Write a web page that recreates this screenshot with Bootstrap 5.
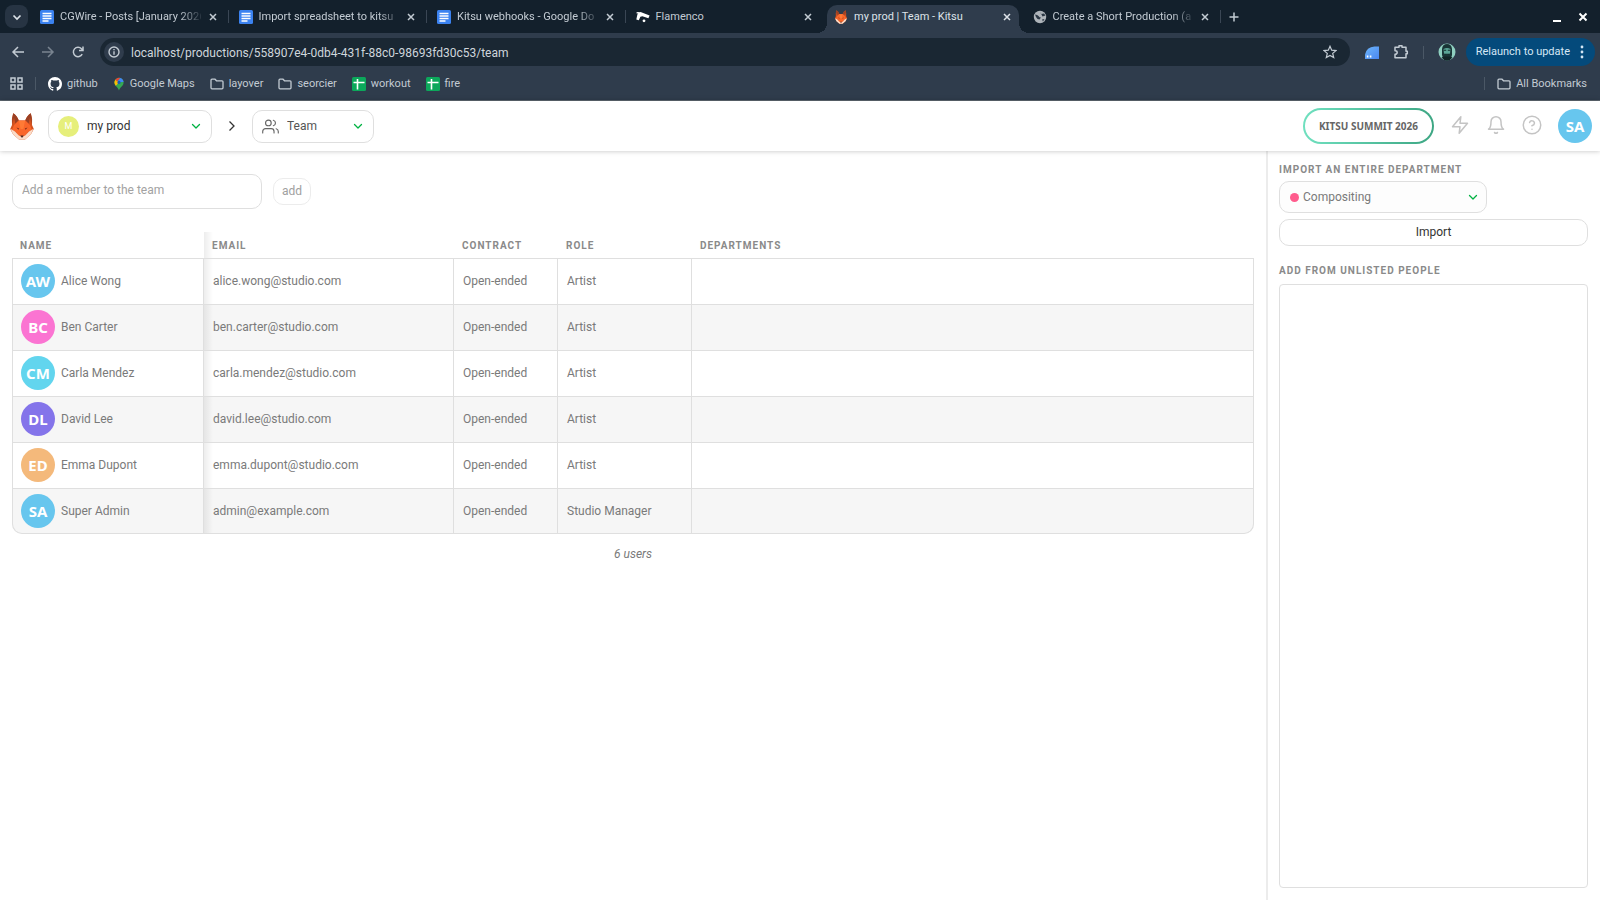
<!DOCTYPE html>
<html lang="en">
<head>
<meta charset="utf-8">
<meta name="viewport" content="width=device-width, initial-scale=1">
<title>my prod | Team - Kitsu</title>
<link href="https://cdn.jsdelivr.net/npm/bootstrap@5.3.0/dist/css/bootstrap.min.css" rel="stylesheet">
<style>
  :root { --line: #dfdfdf; --ink: #7a7a7a; --chrome: #2f3c4c; --chrome-dark: #13202c; --chrome-ink: #c3cbd3; }
  body { font-family: Roboto, "Noto Sans", sans-serif; font-size: 12px; line-height: 16px; color: var(--ink); background: #fff; }
  svg { display: block; flex: none; }
  button { line-height: 16px; }

  /* browser window */
  .browser { background: var(--chrome); color: var(--chrome-ink); font-size: 11px; border-bottom: 1px solid #5e6770; }
  .browser button, .browser a { color: inherit; text-decoration: none; }
  .plain-btn { background: none; border: 0; padding: 0; color: inherit; }
  .tab-strip { background: var(--chrome-dark); height: 33px; }
  .tab-menu { width: 23px; height: 23px; border-radius: 8px; background: #273443; margin: 5px 2px 5px 5px; }
  .tab-list { flex: 0 1 1191px; min-width: 0; }
  .browser-tab { flex: 1 1 0; min-width: 0; height: 33px; padding: 0 12px 0 10px; }
  .browser-tab.sep { background: linear-gradient(#3a4654, #3a4654) right center / 1px 13px no-repeat; }
  .tab-title { flex: 1; min-width: 0; white-space: nowrap; margin: 0 8px 0 6px; }
  .fade-end { -webkit-mask-image: linear-gradient(90deg, #000 85%, transparent 102%); mask-image: linear-gradient(90deg, #000 85%, transparent 102%); }
  .browser-tab.current { color: #dde3e9; position: relative; }
  .browser-tab.current::before { content: ""; position: absolute; z-index: 0; inset: 5px 4px 0 3px; background: var(--chrome); border-radius: 10px 10px 0 0; }
  .browser-tab.current > * { position: relative; }
  .corner { position: absolute !important; bottom: 0; width: 10px; height: 10px; }
  .corner-l { left: -7px; background: radial-gradient(circle at 0 0, var(--chrome-dark) 10px, var(--chrome) 10px); }
  .corner-r { right: -6px; background: radial-gradient(circle at 100% 0, var(--chrome-dark) 10px, var(--chrome) 10px); }
  .v-sep { width: 1px; height: 13px; background: #4b5866; flex: none; }
  .toolbar { height: 38px; padding: 0 5px 0 11px; }
  .toolbar-left { padding-right: 15px; }
  .toolbar-right { padding-left: 15px; gap: 14px; }
  .address { background: #1a2733; height: 28px; border-radius: 14px; padding: 0 13px 0 4px; }
  .address input { background: none; border: 0; outline: 0; padding: 1px 0 0; color: #cfd6dc; font-size: 12px; min-width: 0; }
  .site-info { width: 20px; height: 20px; border-radius: 50%; background: #2f3c4c; margin-right: 7px; }
  .relaunch { background: #044a7b; color: #d5e7f5 !important; border: 0; border-radius: 14px; height: 28px; padding: 0 11px 0 10px; gap: 10px; font-size: 11px; white-space: nowrap; }
  .toolbar-right .relaunch { margin-left: -4px; }
  .bookmarks { height: 29px; padding: 0 13px 4px 10px; }
  .bookmarks a { gap: 5px; }
  .bookmarks .v-sep { margin: 0 12px; }
  .bookmark-links { gap: 15px; }

  /* application */
  .topbar { height: 50px; padding: 0 8px 0 10px; box-shadow: 0 0 5px rgba(0,0,0,.25); position: relative; z-index: 2; background: #fff; }
  .topbar-picks { margin-left: 14px; gap: 15px; }
  .pick { border: 1px solid var(--line); border-radius: 10px; height: 33px; padding: 0 10px 0 9px; background: #fff; }
  .pick select { appearance: none; border: 0; outline: 0; padding: 0; color: inherit; font-size: 12px; line-height: 16px; min-width: 0;
    background: url("data:image/svg+xml,%3Csvg xmlns='http://www.w3.org/2000/svg' width='10' height='10' fill='none' stroke='%2300b242' stroke-width='1.3' stroke-linecap='round' stroke-linejoin='round'%3E%3Cpath d='M1.5 3.5 5 7l3.5-3.500'/%3E%3C/svg%3E") right center no-repeat; }
  .pick-prod { width: 164px; color: #333; }
  .pick-section { width: 122px; color: #555; }
  .pick-dept { width: 208px; color: var(--ink); height: 32px; background: #fdfdfd; }
  .pick-dept select { background-color: #fdfdfd; }
  .prod-dot { width: 21px; height: 21px; border-radius: 50%; background: #e6ef7b; color: #fff; font-size: 9px; }
  .summit { height: 36px; border: 2px solid transparent; border-radius: 18px; padding: 0 14px; font-family: "Noto Sans", sans-serif; font-size: 10px; font-weight: 700; color: #666; text-decoration: none; white-space: nowrap;
    background: linear-gradient(#fff, #fff) padding-box, linear-gradient(90deg, #6fe0bf, #3da683) border-box; }
  .top-icon { color: #c4c4c4; padding-bottom: 2px; }
  .face { width: 34px; height: 34px; border-radius: 50%; color: #fff; font-family: "Noto Sans", sans-serif; font-size: 15px; font-weight: 700; flex: none; }
  .main-pane { padding: 23px 12px 0; min-width: 0; }
  .member-input { width: 250px; height: 35px; border: 1px solid var(--line); border-radius: 10px; padding: 0 9px 3px; font-size: 12px; color: #555; }
  .member-input::placeholder { color: #a2a2a2; opacity: 1; }
  .add-btn { height: 27px; border: 1px solid #ececec; border-radius: 10px; background: #fff; color: #a0a0a0; padding: 0 8px 1px; margin-left: 11px; font-size: 12px; }
  .caps { font-size: 10px; line-height: 16px; font-weight: 700; letter-spacing: 1px; text-transform: uppercase; color: #8a8a8a; }
  .people { border-collapse: separate; border-spacing: 0; table-layout: fixed; width: 100%; margin-top: 23px; }
  .people th { height: 27px; padding: 1px 8px 0; border-bottom: 1px solid var(--line); }
  .people td { height: 46px; padding: 0 9px 1px; border-right: 1px solid var(--line); border-bottom: 1px solid var(--line); }
  .people td:first-child { border-left: 1px solid var(--line); padding-left: 8px; }
  .people .face { margin-right: 6px; }
  .people tbody tr:nth-child(even) { background: #f6f6f6; }
  .people th:nth-child(2), .people td:nth-child(2) { background: linear-gradient(90deg, rgba(0,0,0,.07), transparent) left / 9px 100% no-repeat; }
  .people tbody tr:last-child { border-radius: 0 0 10px 10px; }
  .people tbody tr:last-child td { height: 45px; }
  .people tbody tr:last-child td:first-child { border-bottom-left-radius: 10px; }
  .people tbody tr:last-child td:last-child { border-bottom-right-radius: 10px; }
  .side-pane { width: 334px; flex: none; border-left: 2px solid #ececec; padding: 11px 12px 12px 11px; }
  .import-btn { height: 27px; border: 1px solid var(--line); border-radius: 10px; background: #fff; color: #333; font-size: 12px; padding: 0 0 2px; margin-top: 6px; }
  .pick-dept { margin-top: 3px; padding: 0 8px 0 10px; }
  .side-title { margin: 17px 0 5px; }
  .dept-dot { width: 9px; height: 9px; border-radius: 50%; background: #ff5c8d; flex: none; }
  .unlisted { border: 1px solid var(--line); border-radius: 4px; }
</style>
</head>
<body class="d-flex flex-column min-vh-100">

<svg width="0" height="0" class="position-absolute" aria-hidden="true">
  <defs>
    <symbol id="doc" viewBox="0 0 14 14"><rect width="14" height="14" rx="1.5" fill="#3b82f0"/><path d="M2.500 3.500h9M2.500 6h9M2.500 8.500h9M2.500 11h6" stroke="#fff" stroke-width="1.300"/></symbol>
    <symbol id="sheet" viewBox="0 0 14 14"><rect width="14" height="14" rx="1.5" fill="#0ca85b"/><path d="M5.500 2v10.500M1.500 5.500h11" stroke="#fff" stroke-width="1.600"/></symbol>
    <symbol id="close" viewBox="0 0 8 8"><path d="M1 1l6 6M7 1L1 7" stroke="currentColor" stroke-width="1.500"/></symbol>
    <symbol id="folder" viewBox="0 0 14 12"><path d="M1 9.800V2.200Q1 1.200 2 1.200h3l1.500 1.600H12q1 0 1 1v6q0 1-1 1H2q-1 0-1-1z" fill="none" stroke="currentColor" stroke-width="1.300"/></symbol>
    <symbol id="fox" viewBox="0 0 24 27">
      <path d="M3.200.3Q7 2.500 8.800 7.600h6.400Q17 2.500 20.800.3 22.600 5 22 12l1.800 4-3 5.500-5.800 5H9l-5.800-5-3-5.500L2 12Q1.400 5 3.200.3z" fill="#d4521f"/>
      <path d="M3.200.3Q7 2.500 8.800 7.600L5.500 11 4 4.500 2.500 11Q1.500 5 3.200.3zM20.800.3Q17 2.500 15.200 7.600L18.500 11 20 4.500l1.500 6.500Q22.500 5 20.800.3z" fill="#9a4024"/>
      <path d="M8.500 7.500h7L20 12l2 5-4 2-3 4.500H9L6 19l-4-2 2-5z" fill="#f9662a"/>
      <path d="M.4 15.800 5 18.500l3.800 4L12 24l3.200-1.500 3.800-4 4.600-2.700-2.800 5.700-5.800 5H9l-5.800-5z" fill="#fbdcc8"/>
      <path d="M9 8h6l-1.600 8h-2.800z" fill="#ff7a35"/>
      <path d="M6.500 14.600l2.700.9-.8 1.200zM17.500 14.600l-2.700.9.8 1.200z" fill="#7d2b18"/>
      <path d="M10.300 22.600h3.400L12 25z" fill="#4a2a24"/>
    </symbol>
  </defs>
</svg>

<header class="browser">
  <div class="tab-strip d-flex align-items-center">
    <button class="tab-menu plain-btn d-flex align-items-center justify-content-center" aria-label="Search tabs"><svg width="10" height="10" fill="none" stroke="#dde3e9" stroke-width="1.700"><path d="M1.500 3.500 5 7l3.500-3.500"/></svg></button>
    <nav class="tab-list d-flex">
      <div class="browser-tab sep d-flex align-items-center"><svg width="14" height="14"><use href="#doc"/></svg><a href="#" class="tab-title fade-end">CGWire - Posts [January 2026</a><button class="plain-btn" aria-label="Close tab"><svg width="8" height="8"><use href="#close"/></svg></button></div>
      <div class="browser-tab sep d-flex align-items-center"><svg width="14" height="14"><use href="#doc"/></svg><a href="#" class="tab-title fade-end">Import spreadsheet to kitsu</a><button class="plain-btn" aria-label="Close tab"><svg width="8" height="8"><use href="#close"/></svg></button></div>
      <div class="browser-tab sep d-flex align-items-center"><svg width="14" height="14"><use href="#doc"/></svg><a href="#" class="tab-title fade-end">Kitsu webhooks - Google Do</a><button class="plain-btn" aria-label="Close tab"><svg width="8" height="8"><use href="#close"/></svg></button></div>
      <div class="browser-tab d-flex align-items-center"><svg width="14" height="14" viewBox="0 0 14 14"><path d="M.3 9.500 1.400 4.500Q2.200 2 4.600 2L13.600 5.500l-1.200 2.700-6-1.900-2 .5-1.600 3.500z" fill="#fff"/><path d="M.6 2.800h3" stroke="#fff" stroke-width="1.400"/><circle cx="8" cy="10.800" r="1.400" fill="#fff"/></svg><a href="#" class="tab-title">Flamenco</a><button class="plain-btn" aria-label="Close tab"><svg width="8" height="8"><use href="#close"/></svg></button></div>
      <div class="browser-tab current d-flex align-items-center"><span class="corner corner-l"></span><span class="corner corner-r"></span><svg width="14" height="14"><use href="#fox"/></svg><a href="#" class="tab-title">my prod | Team - Kitsu</a><button class="plain-btn" aria-label="Close tab"><svg width="8" height="8"><use href="#close"/></svg></button></div>
      <div class="browser-tab sep d-flex align-items-center"><svg width="14" height="14" viewBox="0 0 14 14"><circle cx="7" cy="7" r="6.200" fill="#aeb4ba"/><path d="M2 4.500q2.500 0 3.500 1.500t2.500 1.500L6.500 9.500 4.500 9 3 7zM7 1.500l1 2.500 3-.5 1.500 2-3 1zM9 9.500l2.500-.5-1.500 2.500z" fill="#2a3744"/></svg><a href="#" class="tab-title fade-end">Create a Short Production (a</a><button class="plain-btn" aria-label="Close tab"><svg width="8" height="8"><use href="#close"/></svg></button></div>
    </nav>
    <button class="plain-btn ms-2" aria-label="New tab"><svg width="10" height="10" stroke="currentColor" stroke-width="1.500"><path d="M5 .5v9M.5 5h9"/></svg></button>
    <div class="ms-auto d-flex align-items-center gap-3 pe-2 me-1">
      <button class="plain-btn pt-2" aria-label="Minimize"><svg width="10" height="4"><path d="M1 2h8" stroke="#fff" stroke-width="2"/></svg></button>
      <button class="plain-btn text-white" aria-label="Close window"><svg width="10" height="10" stroke="#fff" stroke-width="2"><path d="M1.500 1.500l7 7M8.500 1.500l-7 7"/></svg></button>
    </div>
  </div>

  <div class="toolbar d-flex align-items-center">
    <div class="toolbar-left d-flex align-items-center gap-3">
      <button class="plain-btn" aria-label="Back"><svg width="14" height="14" fill="none" stroke="currentColor" stroke-width="1.500"><path d="M13 7H2.500M7 2 2 7l5 5"/></svg></button>
      <button class="plain-btn opacity-50" aria-label="Forward"><svg width="14" height="14" fill="none" stroke="currentColor" stroke-width="1.500"><path d="M1 7h10.500M7 2l5 5-5 5"/></svg></button>
      <button class="plain-btn" aria-label="Reload"><svg width="14" height="14" fill="none" stroke="currentColor" stroke-width="1.500"><path d="M11.200 9.200A4.700 4.700 0 1 1 10.500 3.700L12 5.200M12 1.500v4H8"/></svg></button>
    </div>
    <div class="address d-flex align-items-center flex-grow-1">
      <span class="site-info d-flex align-items-center justify-content-center"><svg width="12" height="12" fill="none" stroke="currentColor" stroke-width="1.400"><circle cx="6" cy="6" r="5"/><path d="M6 5.200v3.600M6 3v1.200"/></svg></span>
      <input class="flex-grow-1" type="text" aria-label="Address" value="localhost/productions/558907e4-0db4-431f-88c0-98693fd30c53/team">
      <button class="plain-btn" aria-label="Bookmark this page"><svg width="14" height="14" fill="none" stroke="currentColor" stroke-width="1.200"><path d="M7 1.300l1.700 3.900 4.200.4-3.200 2.800 1 4.200L7 10.400l-3.700 2.200 1-4.200L1.100 5.600l4.200-.4z"/></svg></button>
    </div>
    <div class="toolbar-right d-flex align-items-center">
      <svg width="14" height="14"><defs><linearGradient id="whale" x1="0" y1="0" x2="1" y2="1"><stop offset="0" stop-color="#6db6fa"/><stop offset="1" stop-color="#4a86f0"/></linearGradient></defs><path d="M0 14V9.500Q1.500 2 9.500 1.500H14V14z" fill="url(#whale)"/><path d="M1.800 11.500h1.600M4.800 11.500h1.600" stroke="#fff" stroke-width="2"/></svg>
      <svg width="16" height="16" fill="none" stroke="currentColor" stroke-width="1.500" stroke-linejoin="round"><path d="M2 3.200h4V1.800h3v1.400h4v4h1.300v2.600H13v4H2v-3.500q2.200-.2 2.200-1.900T2 6.700z"/></svg>
      <span class="v-sep"></span>
      <svg width="18" height="18" viewBox="0 0 18 18"><circle cx="9" cy="9" r="8.500" fill="#8fd0c0"/><path d="M4 6Q4.500 1 9 1t5 5v6q-1 5-5 5.400Q5 17 4 12z" fill="#193536"/><path d="M5.500 6q3.500-1.800 7 0l-.5 4.500q-3 1.500-6 0z" fill="#5aa596"/><path d="M5.800 7.300h2.400M9.800 7.300h2.400M7 11.300h4" stroke="#14302f" stroke-width="1.100"/><path d="M3.500 14.500q2 2.800 5.500 3 3.500-.2 5.500-3L12 13.500H6z" fill="#122526"/></svg>
      <button class="relaunch d-flex align-items-center">Relaunch to update<svg width="4" height="14" fill="currentColor"><circle cx="2" cy="2" r="1.400"/><circle cx="2" cy="7" r="1.400"/><circle cx="2" cy="12" r="1.400"/></svg></button>
    </div>
  </div>

  <nav class="bookmarks d-flex align-items-center">
    <button class="plain-btn" aria-label="Apps"><svg width="13" height="13" fill="none" stroke="currentColor" stroke-width="1.500"><path d="M1 1h4v4H1zM8 1h4v4H8zM1 8h4v4H1zM8 8h4v4H8z"/></svg></button>
    <span class="v-sep"></span>
    <div class="bookmark-links d-flex align-items-center">
      <a href="#" class="d-flex align-items-center"><svg width="14" height="14" viewBox="0 0 16 16"><path fill="#fff" d="M8 0C3.580 0 0 3.580 0 8c0 3.540 2.290 6.530 5.470 7.590.4.070.55-.17.55-.38 0-.19-.01-.82-.01-1.490-2.010.37-2.530-.49-2.690-.94-.09-.23-.48-.94-.82-1.130-.28-.15-.68-.52-.01-.53.63-.01 1.080.58 1.230.82.720 1.210 1.870.87 2.330.66.070-.52.280-.87.510-1.070-1.780-.2-3.640-.89-3.640-3.950 0-.87.310-1.590.82-2.150-.08-.2-.36-1.020.08-2.120 0 0 .67-.21 2.200.82a7.600 7.600 0 0 1 4 0c1.530-1.040 2.200-.82 2.200-.82.440 1.100.16 1.920.08 2.120.510.56.82 1.270.82 2.150 0 3.070-1.870 3.750-3.650 3.950.290.25.540.73.540 1.480 0 1.070-.01 1.930-.01 2.200 0 .21.150.46.550.38A8 8 0 0 0 16 8c0-4.420-3.580-8-8-8z"/></svg>github</a>
      <a href="#" class="d-flex align-items-center"><svg width="12" height="14" viewBox="0 0 12 14"><path d="M6 .8a4.600 4.600 0 0 1 4.600 4.700C10.600 9 7 10 6 13.400 5 10 1.400 9 1.400 5.500A4.600 4.600 0 0 1 6 .8z" fill="#34a853"/><path d="M1.400 5.500A4.600 4.600 0 0 1 2.600 2.400L6 5.500 2.800 8.700Q1.400 7 1.400 5.500z" fill="#fbbc04"/><path d="M2.500 2.500A4.500 4.500 0 0 1 6 .8L7.500 1 4 4.500z" fill="#ea4335"/><path d="M7.200.9Q10.300 1.800 10.600 5L7 5 4.800 4z" fill="#4285f4"/><circle cx="6" cy="5.400" r="1.600" fill="#1a5bb8"/></svg>Google Maps</a>
      <a href="#" class="d-flex align-items-center"><svg width="14" height="12"><use href="#folder"/></svg>layover</a>
      <a href="#" class="d-flex align-items-center"><svg width="14" height="12"><use href="#folder"/></svg>seorcier</a>
      <a href="#" class="d-flex align-items-center"><svg width="14" height="14"><use href="#sheet"/></svg>workout</a>
      <a href="#" class="d-flex align-items-center"><svg width="14" height="14"><use href="#sheet"/></svg>fire</a>
    </div>
    <span class="v-sep ms-auto"></span>
    <a href="#" class="d-flex align-items-center"><svg width="14" height="12"><use href="#folder"/></svg>All Bookmarks</a>
  </nav>
</header>

<div class="topbar d-flex align-items-center">
  <a href="#" aria-label="Kitsu home"><svg width="24" height="27"><use href="#fox"/></svg></a>
  <div class="topbar-picks d-flex align-items-center">
    <div class="pick pick-prod d-flex align-items-center">
      <span class="prod-dot d-flex align-items-center justify-content-center me-2">M</span>
      <select class="flex-grow-1" aria-label="Production"><option>my prod</option></select>
    </div>
    <svg width="10" height="12" fill="none" stroke="#333" stroke-width="1.300"><path d="M2.500 1.500 7 6l-4.500 4.500"/></svg>
    <div class="pick pick-section d-flex align-items-center">
      <svg class="me-2" width="17" height="17" viewBox="0 0 24 24" fill="none" stroke="#666" stroke-width="1.600" stroke-linecap="round" stroke-linejoin="round"><path d="M17 21v-2a4 4 0 0 0-4-4H5a4 4 0 0 0-4 4v2"/><circle cx="9" cy="7" r="4"/><path d="M23 21v-2a4 4 0 0 0-3-3.870M16 3.130a4 4 0 0 1 0 7.750"/></svg>
      <select class="flex-grow-1" aria-label="Section"><option>Team</option></select>
    </div>
  </div>
  <div class="d-flex align-items-center ms-auto gap-3">
    <a href="#" class="summit d-flex align-items-center">KITSU SUMMIT 2026</a>
    <button class="plain-btn top-icon" aria-label="News"><svg width="20" height="20" viewBox="0 0 24 24" fill="none" stroke="currentColor" stroke-width="1.800" stroke-linejoin="round"><path d="M13 2 3 14h9l-1 8 10-12h-9z"/></svg></button>
    <button class="plain-btn top-icon" aria-label="Notifications"><svg width="20" height="20" viewBox="0 0 24 24" fill="none" stroke="currentColor" stroke-width="1.800" stroke-linecap="round" stroke-linejoin="round"><path d="M18 8A6 6 0 0 0 6 8c0 7-3 9-3 9h18s-3-2-3-9M13.730 21a2 2 0 0 1-3.460 0"/></svg></button>
    <button class="plain-btn top-icon" aria-label="Help"><svg width="20" height="20" viewBox="0 0 24 24" fill="none" stroke="currentColor" stroke-width="1.800" stroke-linecap="round" stroke-linejoin="round"><circle cx="12" cy="12" r="10.500"/><path d="M9.090 9a3 3 0 0 1 5.830 1c0 2-3 3-3 3M12 17h.01"/></svg></button>
    <button class="plain-btn face d-flex align-items-center justify-content-center text-white" style="background:#67c6ee" aria-label="Account">SA</button>
  </div>
</div>

<div class="d-flex flex-grow-1">
  <main class="main-pane flex-grow-1">
    <form class="d-flex align-items-center">
      <input class="member-input" type="text" aria-label="Add a member to the team" placeholder="Add a member to the team">
      <button type="button" class="add-btn">add</button>
    </form>
    <table class="people">
      <colgroup><col width="192"><col width="250"><col width="104"><col width="134"><col></colgroup>
      <thead><tr class="caps"><th>Name</th><th>Email</th><th>Contract</th><th>Role</th><th>Departments</th></tr></thead>
      <tbody>
        <tr><td><div class="d-flex align-items-center"><span class="face d-flex align-items-center justify-content-center" style="background:#67c6ee">AW</span>Alice Wong</div></td><td>alice.wong@studio.com</td><td>Open-ended</td><td>Artist</td><td></td></tr>
        <tr><td><div class="d-flex align-items-center"><span class="face d-flex align-items-center justify-content-center" style="background:#fb74d2">BC</span>Ben Carter</div></td><td>ben.carter@studio.com</td><td>Open-ended</td><td>Artist</td><td></td></tr>
        <tr><td><div class="d-flex align-items-center"><span class="face d-flex align-items-center justify-content-center" style="background:#62d5ee">CM</span>Carla Mendez</div></td><td>carla.mendez@studio.com</td><td>Open-ended</td><td>Artist</td><td></td></tr>
        <tr><td><div class="d-flex align-items-center"><span class="face d-flex align-items-center justify-content-center" style="background:#8474ea">DL</span>David Lee</div></td><td>david.lee@studio.com</td><td>Open-ended</td><td>Artist</td><td></td></tr>
        <tr><td><div class="d-flex align-items-center"><span class="face d-flex align-items-center justify-content-center" style="background:#f4b97b">ED</span>Emma Dupont</div></td><td>emma.dupont@studio.com</td><td>Open-ended</td><td>Artist</td><td></td></tr>
        <tr><td><div class="d-flex align-items-center"><span class="face d-flex align-items-center justify-content-center" style="background:#67c6ee">SA</span>Super Admin</div></td><td>admin@example.com</td><td>Open-ended</td><td>Studio Manager</td><td></td></tr>
      </tbody>
    </table>
    <p class="fst-italic text-center mt-2 pt-1 mb-0">6 users</p>
  </main>

  <aside class="side-pane d-flex flex-column">
    <label class="caps" for="department">Import an entire department</label>
    <div class="pick pick-dept d-flex align-items-center">
      <span class="dept-dot me-1"></span>
      <select id="department" class="flex-grow-1"><option>Compositing</option></select>
    </div>
    <button class="import-btn">Import</button>
    <h2 class="caps side-title">Add from unlisted people</h2>
    <div class="unlisted flex-grow-1"></div>
  </aside>
</div>

<script src="https://cdn.jsdelivr.net/npm/bootstrap@5.3.0/dist/js/bootstrap.bundle.min.js"></script>
</body>
</html>
